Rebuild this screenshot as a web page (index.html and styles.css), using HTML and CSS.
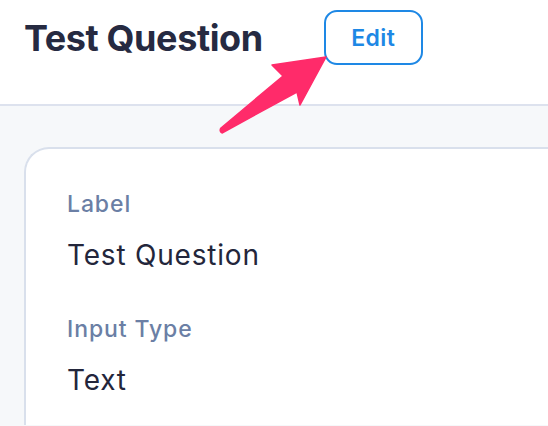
FILE: index.html
```html
<!DOCTYPE html>
<html>
<head>
<meta charset="utf-8">
<link rel="stylesheet" href="styles.css">
</head>
<body>
<header class="header">
  <h1 class="title">Test Question</h1>
  <button class="edit-btn">Edit</button>
</header>
<main class="main">
  <section class="card">
    <div class="field">
      <div class="field-label">Label</div>
      <div class="field-value">Test Question</div>
    </div>
    <div class="field">
      <div class="field-label">Input Type</div>
      <div class="field-value">Text</div>
    </div>
  </section>
</main>
<svg class="arrow" width="548" height="426" viewBox="0 0 548 426">
  <path d="M326 57 L272 65 L283 76 L221 128 Q219 131 222 133 L297 92 L300 105 Z" fill="#ff2b6a" stroke="#ff2b6a" stroke-width="1.5" stroke-linejoin="round"/>
</svg>
</body>
</html>
```
FILE: styles.css
```css
html, body {
  margin: 0;
  padding: 0;
  width: 548px;
  height: 426px;
  overflow: hidden;
  background: #f6f8fa;
  font-family: Inter, "Noto Sans", sans-serif;
}
.header {
  height: 106px;
  box-sizing: border-box;
  background: #ffffff;
  border-bottom: 2px solid #dde2ee;
  display: flex;
  align-items: flex-start;
  padding: 10px 0 0 24px;
  gap: 61px;
}
.title {
  margin: 0;
  margin-top: 6px;
  font-size: 36px;
  font-weight: 700;
  letter-spacing: -0.4px;
  color: #262a41;
  line-height: 44px;
}
.edit-btn {
  width: 99px;
  height: 55px;
  box-sizing: border-box;
  border: 2px solid #1e88e5;
  border-radius: 13px;
  background: #ffffff;
  color: #1e88e5;
  font-family: Inter, "Noto Sans", sans-serif;
  font-size: 23px;
  font-weight: 600;
  letter-spacing: 0.4px;
  padding: 0;
}
.main {
  padding: 41px 0 0 24px;
}
.card {
  box-sizing: border-box;
  background: #ffffff;
  border: 2px solid #d9e0ec;
  border-right: none;
  border-bottom: none;
  border-radius: 25px 0 0 0;
  padding: 41px 0 0 41px;
  height: 278px;
  display: flex;
  flex-direction: column;
  gap: 44px;
}
.field {
  display: flex;
  flex-direction: column;
  gap: 21px;
}
.field-label {
  font-size: 23px;
  font-weight: 500;
  color: #6b7fa5;
  letter-spacing: 0.9px;
  line-height: 28px;
}
.field-value {
  font-size: 28px;
  font-weight: 400;
  color: #23263b;
  letter-spacing: 0.8px;
  line-height: 32px;
}
.arrow {
  position: absolute;
  left: 0;
  top: 0;
  pointer-events: none;
}
```
